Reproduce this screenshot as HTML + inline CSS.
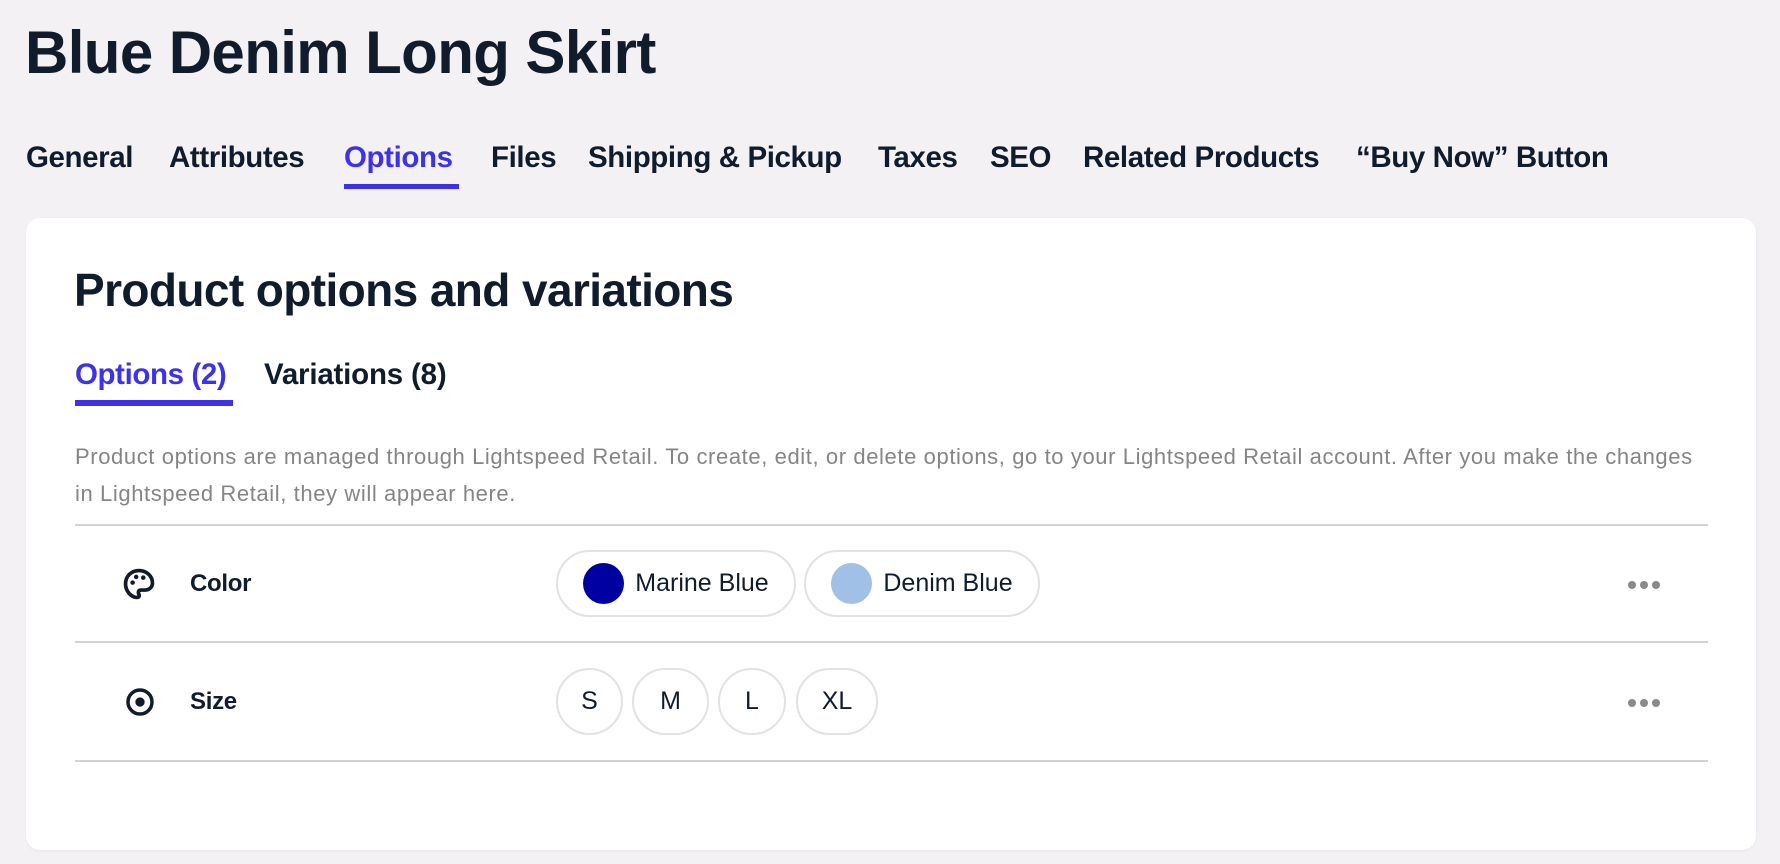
<!DOCTYPE html>
<html><head><meta charset="utf-8"><style>
*{margin:0;padding:0;box-sizing:border-box}
body{width:1780px;height:864px;background:#f3f1f4;font-family:"Liberation Sans",sans-serif;color:#101b2c;position:relative;overflow:hidden}
.a{position:absolute;white-space:nowrap}
h1{position:absolute;left:25px;top:18px;font-size:60px;font-weight:bold;letter-spacing:-0.6px;line-height:70px}
.tab{position:absolute;top:140px;font-size:29.5px;font-weight:bold;letter-spacing:-0.4px;line-height:36px}
.card{position:absolute;left:26px;top:218px;width:1730px;height:632px;background:#fff;border-radius:14px;box-shadow:0 1px 3px rgba(0,0,0,.05)}
.line{position:absolute;left:75px;width:1633px;height:2px;background:#d3d3d3}
.chip{position:absolute;height:67px;border:2px solid #e2e2e2;border-radius:34px;font-size:25px;display:flex;align-items:center;justify-content:center}
.dot{width:41px;height:41px;border-radius:50%;margin-right:11px}
.lbl{position:absolute;font-size:24px;font-weight:bold;letter-spacing:-0.3px}
.more{position:absolute;left:1628px;display:flex;gap:4px}
.more i{width:8px;height:8px;border-radius:50%;background:#8a8a8a;display:block}
</style></head><body>
<h1>Blue Denim Long Skirt</h1>
<div class="tab" style="left:26px">General</div>
<div class="tab" style="left:169px">Attributes</div>
<div class="tab" style="left:344px;color:#3d32e8">Options</div>
<div class="a" style="left:344px;top:184px;width:115px;height:5px;background:#3d32e8"></div>
<div class="tab" style="left:491px">Files</div>
<div class="tab" style="left:588px">Shipping &amp; Pickup</div>
<div class="tab" style="left:878px">Taxes</div>
<div class="tab" style="left:990px">SEO</div>
<div class="tab" style="left:1083px">Related Products</div>
<div class="tab" style="left:1356px">“Buy Now” Button</div>

<div class="card"></div>
<div class="a" style="left:74px;top:262px;font-size:46px;font-weight:bold;letter-spacing:-0.6px;line-height:56px">Product options and variations</div>
<div class="a" style="left:75px;top:358px;font-size:29.5px;font-weight:bold;color:#3d32e8;letter-spacing:-0.4px;line-height:34px">Options (2)</div>
<div class="a" style="left:75px;top:400px;width:158px;height:6px;background:#3d32e8"></div>
<div class="a" style="left:264px;top:358px;font-size:29.5px;font-weight:bold;letter-spacing:-0.2px;line-height:34px">Variations (8)</div>
<div class="a" style="left:75px;top:438px;font-size:22px;color:#858585;line-height:37px;letter-spacing:0.6px">Product options are managed through Lightspeed Retail. To create, edit, or delete options, go to your Lightspeed Retail account. After you make the changes<br>in Lightspeed Retail, they will appear here.</div>
<div class="line" style="top:524px"></div>
<div class="line" style="top:641px"></div>
<div class="line" style="top:760px"></div>

<svg class="a" style="left:122px;top:567px" width="34" height="34" viewBox="0 0 24 24" fill="none" stroke="#101b2c" stroke-width="2.6"><path d="M12 2.5C6.5 2.5 2.5 6.5 2.5 12c0 5 4 9.5 8 9.5 1.6 0 2-1.2 1.4-2.3-.7-1.3-.3-2.9 1.4-2.9H16c3.2 0 5.5-2 5.5-5C21.5 6.3 17.2 2.5 12 2.5z"/><circle cx="7.5" cy="11" r="1.6" fill="#101b2c" stroke="none"/><circle cx="10" cy="7" r="1.6" fill="#101b2c" stroke="none"/><circle cx="15" cy="7.5" r="1.6" fill="#101b2c" stroke="none"/></svg>
<div class="lbl" style="left:190px;top:570px">Color</div>
<div class="chip" style="left:556px;top:550px;width:240px"><span class="dot" style="background:#0000a0"></span>Marine Blue</div>
<div class="chip" style="left:804px;top:550px;width:236px"><span class="dot" style="background:#a0c0e6"></span>Denim Blue</div>
<div class="more" style="top:581px"><i></i><i></i><i></i></div>

<svg class="a" style="left:124px;top:686px" width="32" height="32" viewBox="0 0 24 24" fill="none" stroke="#101b2c" stroke-width="2.6"><circle cx="12" cy="12" r="9"/><circle cx="12" cy="12" r="3.5" fill="#101b2c" stroke="none"/></svg>
<div class="lbl" style="left:190px;top:688px">Size</div>
<div class="chip" style="left:556px;top:668px;width:67px">S</div>
<div class="chip" style="left:632px;top:668px;width:77px">M</div>
<div class="chip" style="left:718px;top:668px;width:68px">L</div>
<div class="chip" style="left:796px;top:668px;width:82px">XL</div>
<div class="more" style="top:699px"><i></i><i></i><i></i></div>
</body></html>
